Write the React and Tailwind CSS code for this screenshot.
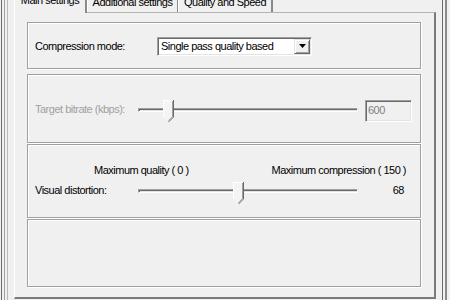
function Thumb({ left }) {
  return (
    <svg
      className="absolute top-0"
      style={{ left }}
      width="11"
      height="23"
      viewBox="0 0 11 23"
    >
      <polygon points="0.5,0.5 10.5,0.5 10.5,17 5.5,22 0.5,17" fill="#f4f4f4" />
      <polyline points="0.5,17 0.5,0.5 10,0.5" fill="none" stroke="#ffffff" />
      <polyline points="10.5,0 10.5,17 5.5,22" fill="none" stroke="#696969" />
      <polyline points="9.5,1 9.5,16.6 5.5,20.6" fill="none" stroke="#a0a0a0" />
    </svg>
  );
}

function Slider({ value, max, top = "mt-[8px]" }) {
  const left = Math.round((value / max) * (220 - 11));
  return (
    <div className="relative w-[220px] h-[22px]">
      <div
        className={`${top} h-[4px] border border-t-[#a0a0a0] border-l-[#a0a0a0] border-b-white border-r-white shadow-[inset_1px_1px_0_#696969,inset_-1px_-1px_0_#e3e3e3]`}
      />
      <Thumb left={left} />
    </div>
  );
}

function Panel({ className, children }) {
  return (
    <div
      className={`w-[394px] border border-[#a0a0a0] shadow-[inset_1px_1px_0_#fff,1px_1px_0_#fff] ${className}`}
    >
      {children}
    </div>
  );
}

export default function App() {
  return (
    <div className="w-[450px] h-[300px] bg-[#f0f0f0] flex overflow-hidden font-['Liberation_Sans',Arial,sans-serif] text-[11px] leading-[13px] tracking-[-0.5px] text-black">
      {/* left window edges */}
      <div className="w-[14px] h-full flex shrink-0">
        <div className="ml-px w-px bg-[#6b6b6b]" />
        <div className="ml-[2px] w-px bg-[#a0a0a0]" />
        <div className="ml-[2px] w-px bg-[#b9b9b9]" />
      </div>

      <div className="w-[422px] shrink-0 flex flex-col">
        {/* tabs */}
        <div className="h-[12px] flex">
          <div className="relative z-10 w-[73px] h-[13px] -mb-px bg-[#f0f0f0] border-l border-l-white border-r-2 border-r-[#8a8a8a] flex justify-center">
            <span className="-mt-[6px] whitespace-nowrap">Main settings</span>
          </div>
          <div className="w-[91px] h-[12px] border-l border-l-white border-r border-r-[#8a8a8a] flex justify-center">
            <span className="-mt-[4px] whitespace-nowrap">Additional settings</span>
          </div>
          <div className="w-[95px] h-[12px] border-l border-l-white border-r-2 border-r-[#8a8a8a] flex justify-center">
            <span className="-mt-[4px] whitespace-nowrap">Quality and Speed</span>
          </div>
        </div>

        {/* tab page */}
        <div className="h-[287px] border-t border-t-[#b4b4b4] border-l border-l-white border-r-2 border-r-[#7a7a7a] border-b-2 border-b-[#7a7a7a] pt-[9px] pl-[12px] flex flex-col">
          <Panel className="h-[47px] flex items-center pl-[7px] pt-px">
            <span className="w-[122px]">Compression mode:</span>
            <div className="w-[155px] h-[19px] border border-t-[#a0a0a0] border-l-[#a0a0a0] border-b-white border-r-white shadow-[inset_1px_1px_0_#696969,inset_-1px_-1px_0_#e3e3e3] bg-white flex items-stretch p-px">
              <span className="flex-1 pl-[2px] flex items-center whitespace-nowrap">
                Single pass quality based
              </span>
              <div className="w-[16px] bg-[#f0f0f0] border border-t-[#e3e3e3] border-l-[#e3e3e3] border-b-[#696969] border-r-[#696969] shadow-[inset_1px_1px_0_#fff,inset_-1px_-1px_0_#a0a0a0] flex items-center justify-center">
                <svg width="7" height="4" viewBox="0 0 7 4">
                  <polygon points="0,0 7,0 3.5,4" fill="#000" />
                </svg>
              </div>
            </div>
          </Panel>

          <Panel className="mt-[5px] h-[69px] pl-[7px] pt-[25px] flex items-start">
            <span className="w-[103px] mt-[3px] text-[#a0a0a0] whitespace-nowrap">
              Target bitrate (kbps):
            </span>
            <Slider value={600} max={5000} />
            <div className="ml-[7px] w-[47px] h-[22px] border border-t-[#a0a0a0] border-l-[#a0a0a0] border-b-white border-r-white shadow-[inset_1px_1px_0_#696969,inset_-1px_-1px_0_#e3e3e3] pl-[2px] pt-[3px] text-[#808080]">
              600
            </div>
          </Panel>

          <Panel className="mt-px h-[74px] pl-[7px] pt-[19px] flex flex-col">
            <div className="flex pl-[59px] pr-[14px]">
              <span className="whitespace-nowrap">Maximum quality ( 0 )</span>
              <span className="ml-auto whitespace-nowrap">Maximum compression ( 150 )</span>
            </div>
            <div className="mt-[5px] flex items-start">
              <span className="w-[103px] mt-[2px] whitespace-nowrap">Visual distortion:</span>
              <Slider value={68} max={150} top="mt-[7px]" />
              <span className="flex-1 text-right pr-[16px] mt-[2px]">68</span>
            </div>
          </Panel>

          <Panel className="mt-px h-[68px]" />
        </div>
      </div>

      {/* right window edges */}
      <div className="w-[14px] h-full flex shrink-0">
        <div className="ml-[6px] w-px bg-[#6b6b6b]" />
        <div className="ml-[2px] w-[2px] bg-[#8a8a8a]" />
      </div>
    </div>
  );
}
